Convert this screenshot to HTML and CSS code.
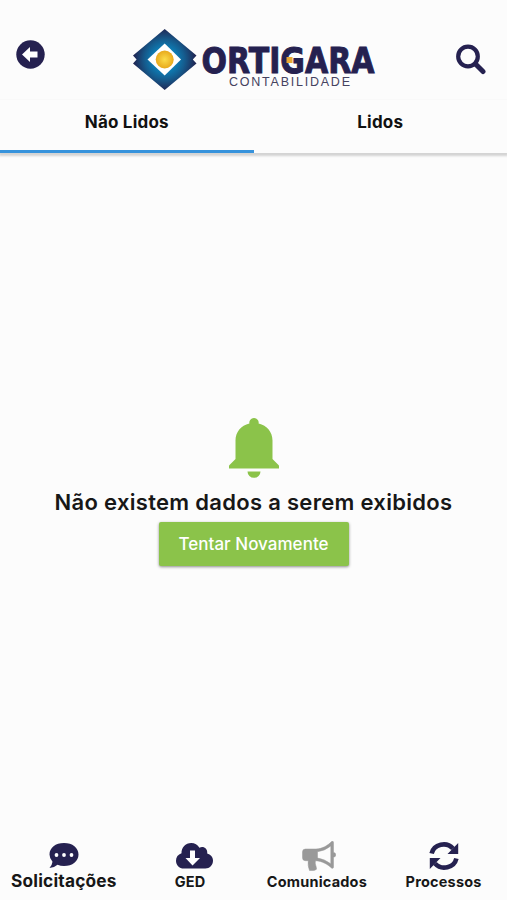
FILE: index.html
```html
<!DOCTYPE html>
<html lang="pt-BR">
<head>
<meta charset="utf-8">
<meta name="viewport" content="width=device-width">
<title>Ortigara Contabilidade</title>
<link rel="stylesheet" href="styles.css">
</head>
<body>
<header class="header">
  <button class="icon-btn back" aria-label="Voltar">
    <svg width="29" height="29" viewBox="0 0 29 29"><circle cx="14.500" cy="14.500" r="14.200" fill="#252150"/><path d="M6 14.500 14 7v4.500h7.500v6H14V22z" fill="#fff"/></svg>
  </button>
  <svg class="logo" width="246" height="68" viewBox="132 28 246 68">
    <defs>
      <radialGradient id="blue" gradientUnits="userSpaceOnUse" cx="164.700" cy="59.500" r="31">
        <stop offset=".35" stop-color="#0c80b8"/><stop offset=".65" stop-color="#155b8d"/><stop offset="1" stop-color="#202653"/>
      </radialGradient>
      <radialGradient id="gold"><stop offset="0" stop-color="#fbdc4b"/><stop offset="1" stop-color="#e8a91c"/></radialGradient>
    </defs>
    <path d="M164.700 29 196.500 55.500 192.800 59.500 196.500 63.500 164.700 90 133 63.500 136.600 59.500 133 55.500z" fill="url(#blue)"/>
    <path d="M164.700 43.500 181 59.500 164.700 75.500 147.500 59.500z" fill="#fff"/>
    <circle cx="164.700" cy="59.500" r="9" fill="url(#gold)"/>
    <text class="brand" x="201.500" y="72.700" textLength="173" lengthAdjust="spacingAndGlyphs">ORTIGARA</text>
    <path d="M286.500 57h6v6h-6z" fill="#e9a834"/>
    <text class="sub" x="229" y="86" textLength="121">CONTABILIDADE</text>
  </svg>
  <button class="icon-btn search" aria-label="Buscar">
    <svg width="30" height="31" viewBox="0 0 30 31" fill="none" stroke="#252150"><circle cx="12" cy="12.500" r="9.800" stroke-width="4.200"/><path d="M19.500 20l7.500 7.500" stroke-width="5" stroke-linecap="round"/></svg>
  </button>
</header>
<nav class="tabs">
  <a class="tab active">Não Lidos</a>
  <a class="tab">Lidos</a>
</nav>
<main class="empty">
  <svg class="bell" width="50" height="60" viewBox="0 0 50 60" fill="#8bc34a"><path d="M25 0a4.600 4.600 0 0 1 4.600 5.500C38 7.500 43.500 14 43.500 22.500V41l6 6q.5.500.5 1.300V50.500H0V48.300q0-.8.500-1.300l6-6V22.500C6.500 14 12 7.500 20.400 5.500A4.600 4.600 0 0 1 25 0zM18.500 53.500h13a6.500 6.300 0 0 1-13 0z"/></svg>
  <h1 class="message">Não existem dados a serem exibidos</h1>
  <button class="retry">Tentar Novamente</button>
</main>
<footer class="bottom">
  <a class="item large">
    <svg width="30" height="26" viewBox="0 0 30 26"><path d="M15 0C23.500 0 29.500 4.800 29.500 11.500S23.500 23 15 23q-3.500 0-6.500-1.200Q5 25 .5 25q2.500-2.500 3-6.200Q.5 15.500.5 11.500C.5 4.800 6.500 0 15 0z" fill="#252150"/><g fill="#fff"><circle cx="7.500" cy="12" r="1.900"/><circle cx="15" cy="12" r="1.900"/><circle cx="22.500" cy="12" r="1.900"/></g></svg>
    <span>Solicitações</span>
  </a>
  <a class="item ged">
    <svg width="37" height="26" viewBox="0 0 37 26"><path d="M8 25.500C3 25.500 0 22 0 17.700c0-3.500 2-6.200 5.500-7.400C5.300 4.500 9.500 0 15.200 0c3.600 0 6.500 1.800 8.200 4.700 3.800-2.200 8.500.8 7.800 5.700 3.300.8 5.800 3.500 5.800 7.100 0 4.500-3.300 8-7.700 8z" fill="#252150"/><path d="M14 7.500h5v7.500h5L16.500 22.500 9.500 15H14z" fill="#fff"/></svg>
    <span>GED</span>
  </a>
  <a class="item news">
    <svg width="34" height="30" viewBox="0 0 34 30"><path d="M3.500 8H14C20 8 26 4.500 29.500.6Q31.500-.4 31.500 1.500V11.300q2.300.5 2.300 2.500t-2.300 2.500V26q0 2-2 1C26 23.500 20 20 13.500 19.700q-.6 2.500.2 4.500.8 2 .8 4-1.500 1.300-3.500 1.300H7.500Q5.500 24 6.300 19.700H3.500Q.5 19.700.5 16.700V11Q.5 8 3.500 8zM15.500 10.700V17Q22.500 18 28.800 22.800V5Q22.500 10 15.500 10.700z" fill="#999" stroke="#999" stroke-width=".5" fill-rule="evenodd"/></svg>
    <span>Comunicados</span>
  </a>
  <a class="item">
    <svg width="30" height="30" viewBox="0 0 30 30"><g fill="none" stroke="#252150" stroke-width="4.600"><path d="M2.600 12.500A12.300 11.500 0 0 1 24 7.500"/><path d="M27.400 17.500A12.300 11.500 0 0 1 6 22.500"/></g><path d="M29.200 2v11H18.500zM.8 28V17h10.700z" fill="#252150"/></svg>
    <span>Processos</span>
  </a>
</footer>
</body>
</html>
```
FILE: styles.css
```css
* { box-sizing: border-box; }
body {
  margin: 0;
  height: 900px;
  display: flex;
  flex-direction: column;
  background: #fcfcfc;
  color: #171717;
  font-family: Inter, "Liberation Sans", sans-serif;
}
svg { display: block; }
button { border: 0; padding: 0; background: none; font: inherit; }
.header {
  height: 100px;
  padding: 28px 21px 0 16px;
  display: flex;
  align-items: flex-start;
}
.back { margin-top: 12px; }
.search { margin: 16px 0 0 auto; }
.logo { margin-left: 87px; }
.brand { font: bold 36px "DejaVu Sans", sans-serif; fill: #252150; stroke: #252150; stroke-width: 1px; }
.sub { font: 12.500px "Liberation Sans", sans-serif; fill: #45425f; }
.tabs {
  height: 53px;
  display: flex;
  box-shadow: 0 2px 2px 1px #d4d4d4;
}
.tab {
  flex: 1;
  padding-top: 11px;
  line-height: 22px;
  text-align: center;
  font-size: 17px;
  font-weight: 650;
  letter-spacing: .2px;
  color: #111;
  border-bottom: 3px solid transparent;
}
.tab.active { border-color: #3793dc; }
.empty {
  flex: 1;
  padding-top: 265px;
  display: flex;
  flex-direction: column;
  align-items: center;
}
.message {
  margin: 9px 0 0;
  font-size: 22px;
  line-height: 30px;
  font-weight: 640;
  letter-spacing: .3px;
  white-space: nowrap;
}
.retry {
  margin-top: 5px;
  width: 190px;
  height: 44px;
  border-radius: 2px;
  background: #8bc34a;
  color: #fff;
  font-size: 17px;
  font-weight: 500;
  letter-spacing: .03px;
  box-shadow: 0 1px 3px rgba(0, 0, 0, .45);
}
.bottom {
  height: 62px;
  display: grid;
  grid-template-columns: repeat(4, 1fr);
}
.item {
  height: 54px;
  display: flex;
  flex-direction: column;
  align-items: center;
  justify-content: flex-end;
  gap: 1px;
  font-size: 14.500px;
  line-height: 20px;
  font-weight: 650;
  letter-spacing: .2px;
}
.large {
  height: 53px;
  gap: 2px;
  padding-left: 1px;
  font-size: 17.300px;
}
.ged { gap: 3px; }
.ged svg { margin-left: 8px; }
.news svg { margin-left: 4px; }
```
